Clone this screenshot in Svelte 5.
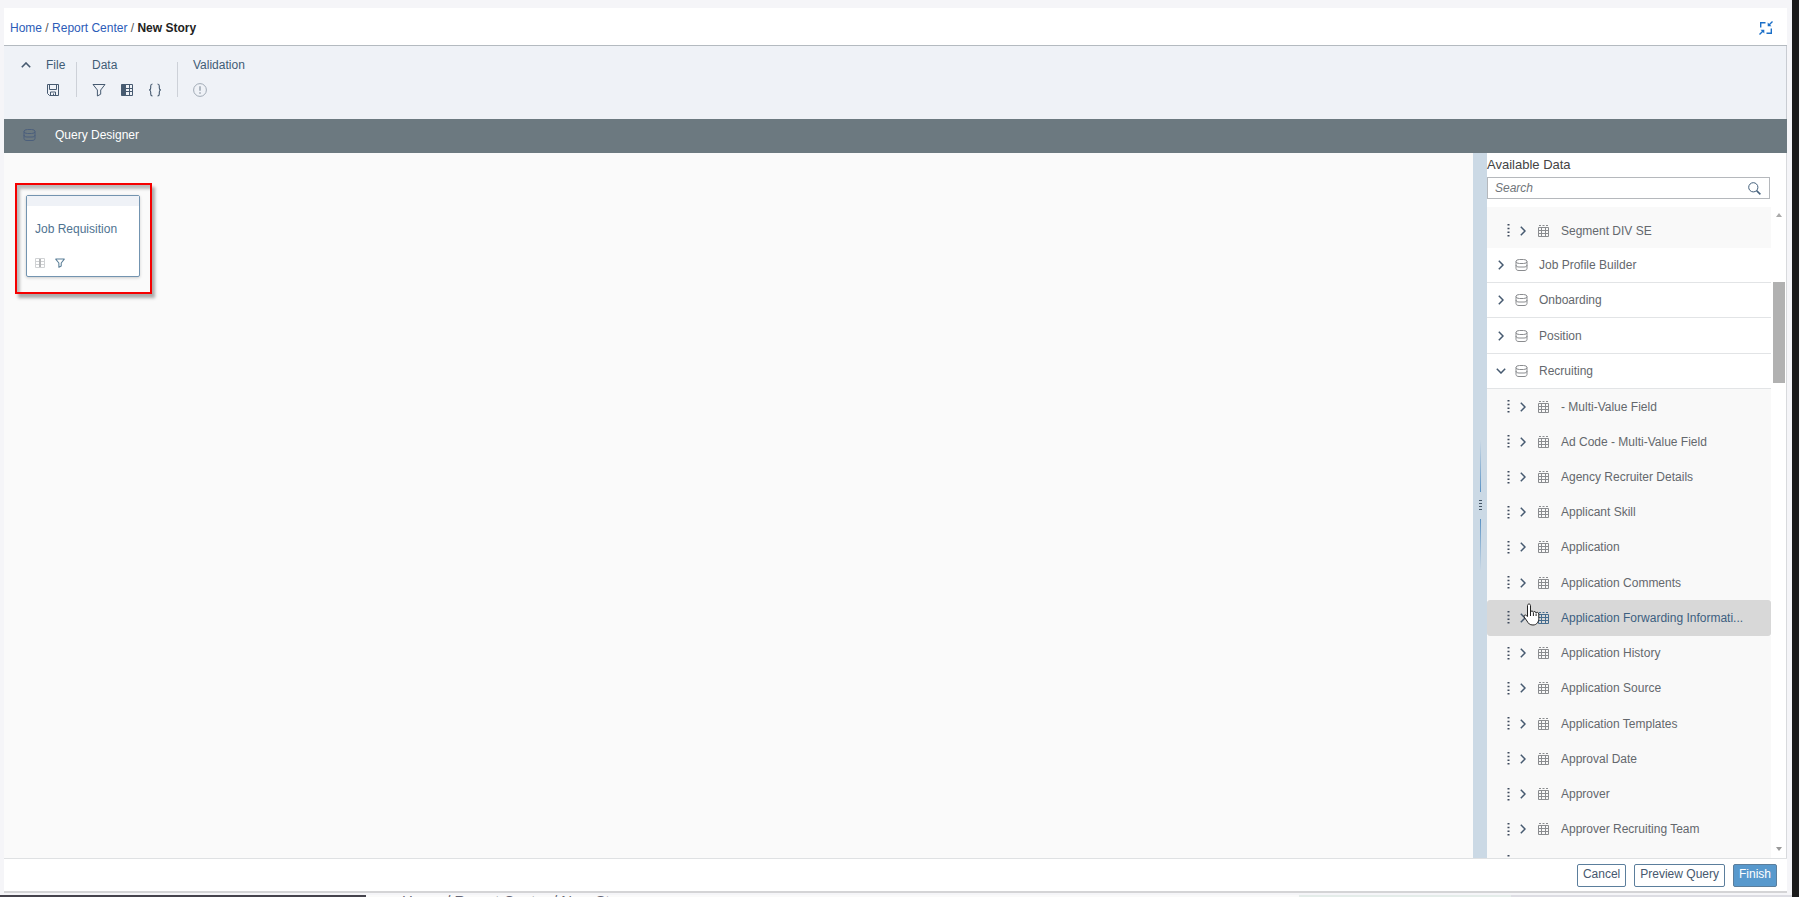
<script>
  const groups = [
    { name: 'Segment DIV SE', child: true, first: true },
    { name: 'Job Profile Builder' },
    { name: 'Onboarding' },
    { name: 'Position' },
    { name: 'Recruiting', open: true },
    ...[
      '- Multi-Value Field',
      'Ad Code - Multi-Value Field',
      'Agency Recruiter Details',
      'Applicant Skill',
      'Application',
      'Application Comments',
      'Application Forwarding Informati...',
      'Application History',
      'Application Source',
      'Application Templates',
      'Approval Date',
      'Approver',
      'Approver Recruiting Team'
    ].map((name) => ({ name, child: true, active: name.includes('Forwarding') }))
  ];
  let query = $state('');
</script>

{#snippet grip()}
  <svg class="grip" width="3" height="13" viewBox="0 0 3 13" aria-hidden="true">
    <path d="M.5 0h2v1.500h-2zM.5 3.700h2v1.500h-2zM.5 7.400h2v1.500h-2zM.5 11h2v1.500h-2z" fill="#3f4a5c" />
  </svg>
{/snippet}

{#snippet funnel(size)}
  <svg width={size} height={size} viewBox="0 0 14 14" fill="none" stroke="currentColor" stroke-width={size < 12 ? 1.5 : 1} aria-hidden="true">
    <path d="M1 1.5h12L8.700 7v4.200L5.400 13V7z" stroke-linejoin="round" />
  </svg>
{/snippet}

{#snippet database()}
  <svg width="14" height="14" viewBox="0 0 14 14" fill="none" stroke="currentColor" aria-hidden="true">
    <rect x="1" y="1.500" width="11" height="4" rx="3.500" ry="2" />
    <path d="M1 3.500v7C1 12 2.500 12.500 4 12.500h5c1.500 0 3-.5 3-2v-7M1 7c0 1.500 1.500 2 3 2h5c1.500 0 3-.5 3-2" />
  </svg>
{/snippet}

{#snippet table()}
  <svg width="12" height="14" viewBox="0 0 12 14" fill="none" stroke="currentColor" aria-hidden="true">
    <path d="M.5 3.500h10v9H.5zM.5 6.500h10M.5 9.500h10M3.500 3.500v9M7.500 3.500v9" />
    <path d="M1 1.500h2M4.500 1.500h2M8 1.500h2" />
  </svg>
{/snippet}

<div class="screen">
  <div class="app">
    <header class="top">
      <nav aria-label="Breadcrumb">
        <a href="#home">Home</a> <i>/</i> <a href="#reports">Report Center</a> <i>/</i> <b>New Story</b>
      </nav>
      <button class="icon blue" aria-label="Exit full screen">
        <svg width="14" height="14" viewBox="0 0 14 14" fill="none" stroke="currentColor" stroke-width="1.400" aria-hidden="true">
          <path d="M1.700 6.500V1.700H6.500M12.300 7.500v4.800H7.500M13.500.5l-3.500 3.500M.5 13.500 4 10" />
          <path d="M8.700 1.500v3.800h3.800zM5.300 12.500V8.700H1.500z" fill="currentColor" stroke="none" />
        </svg>
      </button>
    </header>

    <div class="toolbar">
      <button class="icon collapse" aria-label="Collapse toolbar">
        <svg width="10" height="6" viewBox="0 0 10 6" fill="none" stroke="currentColor" stroke-width="1.600"><path d="M.8 5.200 5 1l4.200 4.200" /></svg>
      </button>
      <section class="tools file">
        <h2>File</h2>
        <div class="icons">
          <button class="icon" aria-label="Save">
            <svg width="14" height="14" viewBox="0 0 14 14" fill="none" stroke="currentColor" aria-hidden="true">
              <path d="M1.500 1.500h11v11h-9l-2-2zM3.500 1.500v5h7v-5M4.500 12.500v-3.500h5v3.500M7.500 10.500v2" />
            </svg>
          </button>
        </div>
      </section>
      <section class="tools data">
        <h2>Data</h2>
        <div class="icons">
          <button class="icon" aria-label="Filter">{@render funnel(14)}</button>
          <button class="icon" aria-label="Columns">
            <svg width="14" height="14" viewBox="0 0 14 14" fill="none" stroke="currentColor" aria-hidden="true">
              <path d="M1.500 1.500h4v11h-4z" fill="currentColor" />
              <path d="M5.500 1.500h7v11h-7zM5.500 5.500h7M5.500 8.500h7M9.500 1.500v11" />
            </svg>
          </button>
          <button class="icon" aria-label="Calculated fields">
            <svg width="14" height="14" viewBox="0 0 14 14" fill="none" stroke="currentColor" stroke-width="1.100" aria-hidden="true">
              <path d="M4.500 1C3 1 2.700 1.600 2.700 3v2C2.700 6.300 2.200 7 1 7c1.200 0 1.700.7 1.700 2v2c0 1.400.3 2 1.800 2M9.500 1c1.500 0 1.800.6 1.800 2v2c0 1.300.5 2 1.700 2-1.200 0-1.700.7-1.700 2v2c0 1.400-.3 2-1.800 2" />
            </svg>
          </button>
        </div>
      </section>
      <section class="tools validation">
        <h2>Validation</h2>
        <div class="icons">
          <button class="icon faint" aria-label="Validate">
            <svg width="14" height="14" viewBox="0 0 14 14" fill="none" stroke="currentColor" aria-hidden="true">
              <circle cx="7" cy="7" r="6.400" /><path d="M7 3.200v4.600M7 9.200v1.600" stroke-width="1.600" />
            </svg>
          </button>
        </div>
      </section>
    </div>

    <div class="bar">{@render database()}<h1>Query Designer</h1></div>

    <div class="body">
      <main>
        <div class="highlight">
          <article>
            <div class="strip"></div>
            <h3>Job Requisition</h3>
            <div class="marks">
              <svg width="10" height="10" viewBox="0 0 10 10" fill="none" stroke="#d0d2d4" aria-hidden="true">
                <path d="M.5.5h9v9h-9zM.5 3.500h9M.5 6.500h9" /><path d="M5 1v8" stroke="#b4b6b8" stroke-width="2" />
              </svg>
              {@render funnel(10)}
            </div>
          </article>
        </div>
      </main>

      <div class="splitter" role="separator">
        <span class="line up"></span>
        <span class="dots"></span>
        <span class="line down"></span>
      </div>

      <aside>
        <label for="search">Available Data</label>
        <div class="search">
          <input id="search" type="text" placeholder="Search" bind:value={query} />
          <svg width="13" height="13" viewBox="0 0 13 13" fill="none" stroke="#44607c" aria-hidden="true">
            <circle cx="5.300" cy="5.300" r="4.600" /><path d="m8.600 8.600 3.800 3.800" stroke-width="1.500" />
          </svg>
        </div>
        <div class="scroller">
          <ul>
            {#each groups as row}
              <li class:child={row.child} class:first={row.first} class:active={row.active}>
                {#if row.child}{@render grip()}{/if}
                <button class="icon toggle" aria-label="Toggle {row.name}">
                  {#if row.open}
                    <svg width="10" height="6" viewBox="0 0 10 6" fill="none" stroke="currentColor" stroke-width="1.500"><path d="M.8.8 5 5 9.200.8" /></svg>
                  {:else}
                    <svg width="6" height="10" viewBox="0 0 6 10" fill="none" stroke="currentColor" stroke-width="1.500"><path d="M.8.8 5 5 .8 9.200" /></svg>
                  {/if}
                </button>
                <span class="kind">
                  {#if row.child}{@render table()}{:else}{@render database()}{/if}
                </span>
                <span class="name">{row.name}</span>
                {#if row.active}
                  <svg class="pointer" width="18" height="24" viewBox="0 0 18 24" aria-hidden="true">
                    <path d="M4.500 13.500V2.500c0-2 3-2 3 0V9c.3-1.500 2.700-1.300 2.900.3.500-1.200 2.500-1 2.700.7.600-1.200 2.700-.8 2.700 1v4.500c0 3-1.800 6.500-5.800 6.500-3.500 0-4.500-1.500-6-4L1.200 14c-.9-1.600 1.100-2.700 2.200-1.400z" fill="#fff" stroke="#222" />
                    <path d="M7.500 9v4M10.400 9.500v3.500M13.100 10.500V13" stroke="#222" />
                  </svg>
                {/if}
              </li>
            {/each}
            <li class="child rest">{@render grip()}</li>
          </ul>
          <div class="track">
            <span class="tri up"></span>
            <span class="thumb"></span>
            <span class="tri down"></span>
          </div>
        </div>
      </aside>
    </div>

    <footer>
      <button>Cancel</button>
      <button>Preview Query</button>
      <button class="primary">Finish</button>
    </footer>
  </div>

  <div class="under">
    <span class="dark"></span>
    <span class="trail">Home / Report Center / New Story</span>
    <span class="tint"></span>
    <span class="tail"></span>
  </div>
</div>

<style>
  :global(body) { margin: 0; }
  .screen {
    box-sizing: border-box;
    height: 100vh;
    display: flex;
    flex-direction: column;
    padding-top: 8px;
    overflow: hidden;
    background: #f5f5f8;
    border-right: 7px solid #1c1c1c;
    font-family: "Liberation Sans", Arial, sans-serif;
    font-size: 12px;
    line-height: 16px;
    color: #64686d;
  }
  h1, h2, h3, ul { margin: 0; padding: 0; font-size: inherit; font-weight: 400; }
  svg { display: block; flex: none; }
  button, input { font: inherit; }
  .icon { display: flex; border: 0; padding: 0; background: none; color: #465a70; }
  .blue { color: #1b6fc8; }
  .faint { color: #a0aab5; }

  .app {
    flex: 1;
    min-height: 0;
    display: flex;
    flex-direction: column;
    margin: 0 5px 0 4px;
    background: #fff;
    border-bottom: 2px solid #d4d4d6;
  }
  .top {
    display: flex;
    align-items: center;
    justify-content: space-between;
    height: 35px;
    padding: 2px 14px 0 6px;
    border-bottom: 1px solid #b4bac0;
  }
  nav a { color: #2c5cb8; text-decoration: none; }
  nav i { color: #555; font-style: normal; }
  nav b { color: #222; }

  .toolbar {
    display: flex;
    height: 65px;
    padding: 8px 0 0 17px;
    background: #eff2f7;
    border-right: 1px solid #c8ccd2;
  }
  .collapse { width: 12px; height: 22px; align-items: center; margin-right: 13px; }
  .tools { display: flex; flex-direction: column; gap: 10px; height: 46px; padding: 3px 0 0; box-sizing: border-box; }
  .toolbar .tools + .tools { border-left: 1px solid #cdd1d8; padding-left: 15px; margin-top: 8px; height: 35px; padding-top: 0; }
  .toolbar .tools + .tools h2 { margin-top: -5px; }
  .tools h2 { color: #3f5c75; }
  .icons { display: flex; gap: 14px; }
  .file { width: 30px; }
  .data { width: 101px; box-sizing: border-box; }

  .bar {
    display: flex;
    align-items: center;
    gap: 18px;
    height: 32px;
    padding: 0 0 2px 19px;
    background: #6c7980;
    color: #4b5f7c;
  }
  .bar h1 { color: #fff; }

  .body { flex: 1; min-height: 0; display: flex; }
  main { flex: 1; background: #fafafa; padding: 30px 0 0 11px; }
  .highlight {
    width: max-content;
    padding: 10px 10px 15px 9px;
    border: 2px solid #f50000;
    box-shadow: 3px 4px 3px #aaa, inset 3px 4px 3px #bbb;
  }
  article {
    width: 112px;
    height: 80px;
    background: #fff;
    border: 1px solid #7394b0;
    border-radius: 2px;
    box-shadow: 0 1px 3px #ccc;
  }
  .strip { height: 10px; background: #eff2f7; }
  article h3 { padding: 15px 8px 0; color: #4f7391; }
  .marks { display: flex; align-items: center; gap: 10px; padding: 21px 8px 0; color: #5b7f98; }

  .splitter {
    width: 14px;
    display: flex;
    flex-direction: column;
    align-items: center;
    justify-content: center;
    gap: 8px;
    background: #cbd9e5;
  }
  .line { width: 1px; height: 52px; }
  .line.up { background: linear-gradient(#cbd9e5, #5a92c4); }
  .line.down { background: linear-gradient(#5a92c4, #cbd9e5); }
  .dots { width: 3px; height: 11px; background: repeating-linear-gradient(#456 0 1px, transparent 1px 3px); }

  aside { width: 300px; display: flex; flex-direction: column; border-right: 1px solid #d8dadd; box-sizing: border-box; }
  aside label { font-size: 13px; color: #444; padding: 4px 0; }
  .search {
    display: flex;
    align-items: center;
    height: 20px;
    margin-right: 16px;
    padding-right: 8px;
    border: 1px solid #b5b8bc;
  }
  .search input { flex: 1; min-width: 0; border: 0; outline: 0; padding: 0 7px; background: none; }
  .search input::placeholder { color: #70757a; font-style: italic; opacity: 1; }

  .scroller { flex: 1; min-height: 0; display: flex; gap: 2px; padding-top: 8px; }
  ul {
    flex: 1;
    display: grid;
    grid-template-rows: 41px repeat(17, minmax(35px, 1fr)) 11px;
    overflow: hidden;
    list-style: none;
  }
  li {
    position: relative;
    display: flex;
    align-items: center;
    min-height: 0;
    padding-left: 9px;
    border-bottom: 1px solid #e2e4e6;
  }
  li.child { padding-left: 20px; border: 0; background: #f9f9f9; }
  li.first { padding-top: 6px; }
  li.rest { align-items: start; padding-top: 8px; overflow: hidden; }
  li.active { background: #d8d8d8; border-radius: 3px; color: #3d5f80; }
  .toggle { width: 10px; height: 14px; align-items: center; justify-content: center; margin-right: 9px; }
  .child .toggle { margin: 0 10px 0 8px; }
  .kind { width: 24px; color: #8a8c8f; }
  .child .kind { width: 23px; }
  .active .kind { color: #456c8e; }
  .pointer { position: absolute; left: 36px; top: 3px; }

  .track { width: 12px; display: flex; flex-direction: column; align-items: center; margin-right: 1px; }
  .tri { border: 3px solid transparent; }
  .tri.up { border-bottom: 4px solid #aaa; border-top: 0; margin: 6px 0 65px; }
  .tri.down { border-top: 4px solid #999; border-bottom: 0; margin: auto 0 7px; }
  .thumb { width: 12px; height: 101px; background: #b1b1b1; }

  footer {
    display: flex;
    justify-content: flex-end;
    gap: 8px;
    height: 33px;
    padding: 5px 10px 0 0;
    box-sizing: border-box;
    border-top: 1px solid #dfe1e3;
  }
  footer button {
    height: 23px;
    padding: 0 5px 3px;
    border: 1px solid #5b7e9c;
    border-radius: 2px;
    background: #fff;
    color: #46586e;
  }
  footer .primary { background: #5899cd; color: #fff; }

  .under { display: flex; height: 2px; margin-top: 2px; overflow: hidden; background: #fafafa; }
  .dark { width: 366px; background: #45434c; }
  .trail { padding-left: 36px; font-size: 15px; line-height: 12px; color: #667; flex: 1; }
  .tint { width: 212px; background: #e4ece9; }
  .tail { width: 281px; background: #dddde3; }
</style>
